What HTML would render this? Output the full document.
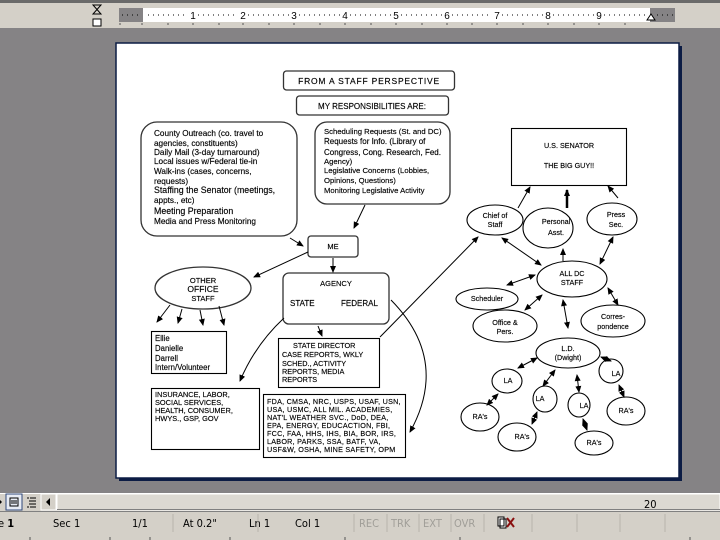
<!DOCTYPE html>
<html><head><meta charset="utf-8"><style>
html,body{margin:0;padding:0;width:720px;height:540px;overflow:hidden;background:#858385;font-family:"Liberation Sans",sans-serif}
svg{position:absolute;left:0;top:0}
</style></head><body>
<svg width="720" height="540" viewBox="0 0 720 540" xmlns="http://www.w3.org/2000/svg" font-family="Liberation Sans, sans-serif">
<defs>
<marker id="a" markerWidth="8" markerHeight="8" refX="6" refY="3" orient="auto" markerUnits="userSpaceOnUse"><path d="M0,0 L7,3 L0,6 z" fill="#000"/></marker>
<marker id="b" markerWidth="8" markerHeight="8" refX="1" refY="3" orient="auto" markerUnits="userSpaceOnUse"><path d="M7,0 L0,3 L7,6 z" fill="#000"/></marker>
</defs>
<rect x="0" y="0" width="720" height="28" fill="#d4d0c8"/>
<rect x="0" y="0" width="720" height="3" fill="#6a6a6a"/>
<rect x="119" y="8" width="24" height="14" fill="#858385"/>
<rect x="143" y="8" width="507" height="14" fill="#fff"/>
<rect x="650" y="8" width="25" height="14" fill="#858385"/>
<path d="M93,5 h8 l-8,9 h8 z" fill="none" stroke="#000"/>
<rect x="93" y="19" width="8" height="7" fill="#fff" stroke="#000"/>
<path d="M647,20 l4,-6 l4,6 z" fill="#fff" stroke="#000"/>
<g font-size="10" fill="#000" text-anchor="middle">
<text x="193" y="19">1</text><text x="243" y="19">2</text><text x="294" y="19">3</text><text x="345" y="19">4</text><text x="396" y="19">5</text><text x="447" y="19">6</text><text x="497" y="19">7</text><text x="548" y="19">8</text><text x="599" y="19">9</text>
</g>
<path d="M122,15 h18 M148,15 h40 M198,15 h40 M248,15 h41 M299,15 h41 M350,15 h41 M401,15 h41 M452,15 h40 M502,15 h41 M553,15 h41 M604,15 h42 M657,15 h16" stroke="#000" stroke-dasharray="1,4" stroke-width="1"/>
<path d="M120,23 v2 M142,23 v2 M168,23 v2 M193,23 v2 M219,23 v2 M243,23 v2 M269,23 v2 M294,23 v2 M320,23 v2 M345,23 v2 M371,23 v2 M396,23 v2 M422,23 v2 M447,23 v2 M472,23 v2 M497,23 v2 M523,23 v2 M548,23 v2 M574,23 v2 M599,23 v2 M625,23 v2" stroke="#555"/>

<rect x="119" y="46" width="563" height="435" fill="#0c1c44"/>
<rect x="116" y="43" width="563" height="435" fill="#fff" stroke="#0c1c44" stroke-width="1.5"/>

<g fill="none" stroke="#333" stroke-width="1.3">
<rect x="283.5" y="71" width="171" height="19" rx="3"/>
<rect x="296.5" y="96" width="152" height="19" rx="3"/>
<rect x="141" y="122" width="156" height="114" rx="16"/>
<rect x="315" y="122" width="135" height="82" rx="12"/>
<rect x="308" y="236" width="50" height="21" rx="3"/>
<ellipse cx="203" cy="288" rx="48" ry="21"/>
<rect x="283" y="273" width="106" height="51" rx="6"/>
</g>
<g fill="none" stroke="#000" stroke-width="1.1">
<rect x="151.5" y="331.5" width="75" height="42"/>
<rect x="278.5" y="338.5" width="101" height="49"/>
<rect x="151.5" y="388.5" width="108" height="61"/>
<rect x="263.5" y="394.5" width="142" height="63"/>
<rect x="511.5" y="128.5" width="115" height="57"/>
<ellipse cx="495" cy="220" rx="28" ry="15"/>
<ellipse cx="548" cy="228" rx="25" ry="20"/>
<ellipse cx="612" cy="219" rx="25" ry="16"/>
<ellipse cx="572" cy="279" rx="35" ry="18"/>
<ellipse cx="487" cy="299" rx="31" ry="11"/>
<ellipse cx="505" cy="326" rx="32" ry="16"/>
<ellipse cx="613" cy="321" rx="32" ry="16"/>
<ellipse cx="568" cy="353" rx="32" ry="15"/>
<ellipse cx="507" cy="381" rx="15" ry="12"/>
<ellipse cx="545" cy="399" rx="12" ry="13"/>
<ellipse cx="579" cy="405" rx="11" ry="12"/>
<ellipse cx="611" cy="371" rx="12" ry="12"/>
<ellipse cx="480" cy="417" rx="19" ry="14"/>
<ellipse cx="517" cy="437" rx="19" ry="14"/>
<ellipse cx="594" cy="443" rx="19" ry="12"/>
<ellipse cx="626" cy="411" rx="19" ry="14"/>
</g>

<g stroke="#000" stroke-width="1" fill="none">
<line x1="290" y1="238" x2="303" y2="246" marker-end="url(#a)"/>
<line x1="365" y1="205" x2="354" y2="228" marker-end="url(#a)"/>
<line x1="308" y1="252" x2="254" y2="277" marker-end="url(#a)"/>
<line x1="333" y1="258" x2="333" y2="272" marker-end="url(#a)"/>
<line x1="170" y1="305" x2="157" y2="322" marker-end="url(#a)"/>
<line x1="182" y1="309" x2="178" y2="323" marker-end="url(#a)"/>
<line x1="200" y1="310" x2="203" y2="325" marker-end="url(#a)"/>
<line x1="219" y1="306" x2="224" y2="325" marker-end="url(#a)"/>
<line x1="318" y1="326" x2="322" y2="336" marker-end="url(#a)"/>
<path d="M284,318 Q255,345 240,381" marker-end="url(#a)"/>
<path d="M391,300 Q450,360 410,432" marker-end="url(#a)"/>
<line x1="380" y1="337" x2="478" y2="237" marker-end="url(#a)"/>
<line x1="518" y1="208" x2="530" y2="187" marker-end="url(#a)"/>
<line x1="567" y1="208" x2="567" y2="190" marker-end="url(#a)" stroke-width="2.5"/>
<line x1="618" y1="198" x2="608" y2="186" marker-end="url(#a)"/>
<line x1="502" y1="238" x2="541" y2="265" marker-start="url(#b)" marker-end="url(#a)"/>
<line x1="563" y1="261" x2="563" y2="249" marker-end="url(#a)"/>
<line x1="613" y1="237" x2="600" y2="264" marker-start="url(#b)" marker-end="url(#a)"/>
<line x1="535" y1="275" x2="507" y2="285" marker-start="url(#b)" marker-end="url(#a)"/>
<line x1="542" y1="295" x2="525" y2="310" marker-start="url(#b)" marker-end="url(#a)"/>
<line x1="608" y1="288" x2="618" y2="305" marker-start="url(#b)" marker-end="url(#a)"/>
<line x1="563" y1="300" x2="568" y2="328" marker-start="url(#b)" marker-end="url(#a)"/>
<line x1="537" y1="358" x2="518" y2="368" marker-start="url(#b)" marker-end="url(#a)"/>
<line x1="555" y1="370" x2="543" y2="386" marker-start="url(#b)" marker-end="url(#a)"/>
<line x1="577" y1="375" x2="579" y2="392" marker-start="url(#b)" marker-end="url(#a)"/>
<line x1="601" y1="357" x2="611" y2="361" marker-start="url(#b)" marker-end="url(#a)"/>
<line x1="498" y1="394" x2="487" y2="405" marker-start="url(#b)" marker-end="url(#a)"/>
<line x1="537" y1="412" x2="532" y2="424" marker-start="url(#b)" marker-end="url(#a)"/>
<line x1="583" y1="419" x2="587" y2="430" marker-start="url(#b)" marker-end="url(#a)"/>
<line x1="619" y1="385" x2="624" y2="397" marker-start="url(#b)" marker-end="url(#a)"/>
</g>

<g fill="#000" font-size="8.5" stroke="#000" stroke-width="0.15">
<text x="369" y="84" text-anchor="middle" letter-spacing="0.8">FROM A STAFF PERSPECTIVE</text>
<text x="372" y="109" text-anchor="middle" font-size="8">MY RESPONSIBILITIES ARE:</text>
<g font-size="8.2">
<text x="154" y="136">County Outreach (co. travel to</text>
<text x="154" y="146">agencies, constituents)</text>
<text x="154" y="155">Daily Mail (3-day turnaround)</text>
<text x="154" y="164">Local issues w/Federal tie-in</text>
<text x="154" y="174">Walk-ins (cases, concerns,</text>
<text x="154" y="184">requests)</text>
<text x="154" y="193" font-size="8.8">Staffing the Senator (meetings,</text>
<text x="154" y="203">appts., etc)</text>
<text x="154" y="214" font-size="8.8">Meeting Preparation</text>
<text x="154" y="224">Media and Press Monitoring</text>
<text x="324" y="134" font-size="7.7">Scheduling Requests (St. and DC)</text>
<text x="324" y="144" font-size="8">Requests for Info. (Library of</text>
<text x="324" y="155" font-size="8">Congress, Cong. Research, Fed.</text>
<text x="324" y="164" font-size="7.7">Agency)</text>
<text x="324" y="173" font-size="7.7">Legislative Concerns (Lobbies,</text>
<text x="324" y="183" font-size="7.7">Opinions, Questions)</text>
<text x="324" y="193" font-size="7.7">Monitoring Legislative Activity</text>
</g>
<text x="333" y="249" text-anchor="middle" font-size="7.5">ME</text>
<g font-size="7.5" text-anchor="middle">
<text x="203" y="283">OTHER</text>
<text x="203" y="292" font-size="8.5">OFFICE</text>
<text x="203" y="301">STAFF</text>
<text x="336" y="286">AGENCY</text>
</g>
<text x="290" y="306" font-size="8">STATE</text>
<text x="341" y="306" font-size="8">FEDERAL</text>
<g font-size="7.8">
<text x="155" y="341">Ellie</text><text x="155" y="351">Danielle</text><text x="155" y="361">Darrell</text><text x="155" y="370">Intern/Volunteer</text>
</g>
<g font-size="7.3">
<text x="293" y="348">STATE DIRECTOR</text>
<text x="282" y="357">CASE REPORTS, WKLY</text>
<text x="282" y="366">SCHED., ACTIVITY</text>
<text x="282" y="374">REPORTS, MEDIA</text>
<text x="282" y="382">REPORTS</text>
</g>
<g font-size="7.4">
<text x="155" y="397">INSURANCE, LABOR,</text>
<text x="155" y="405">SOCIAL SERVICES,</text>
<text x="155" y="413">HEALTH, CONSUMER,</text>
<text x="155" y="421">HWYS., GSP, GOV</text>
</g>
<g font-size="7.2" letter-spacing="0.25">
<text x="267" y="404">FDA, CMSA, NRC, USPS, USAF, USN,</text>
<text x="267" y="412">USA, USMC, ALL MIL. ACADEMIES,</text>
<text x="267" y="420">NAT'L WEATHER SVC., DoD, DEA,</text>
<text x="267" y="428">EPA, ENERGY, EDUCACTION, FBI,</text>
<text x="267" y="436">FCC, FAA, HHS, IHS, BIA, BOR, IRS,</text>
<text x="267" y="444">LABOR, PARKS, SSA, BATF, VA,</text>
<text x="267" y="452">USF&amp;W, OSHA, MINE SAFETY, OPM</text>
</g>
<g font-size="7.2" text-anchor="middle">
<text x="569" y="148">U.S. SENATOR</text>
<text x="569" y="168">THE BIG GUY!!</text>
<text x="495" y="218">Chief of</text><text x="495" y="227">Staff</text>
<text x="556" y="224">Personal</text><text x="556" y="235">Asst.</text>
<text x="616" y="217">Press</text><text x="616" y="227">Sec.</text>
<text x="572" y="276">ALL DC</text><text x="572" y="285">STAFF</text>
<text x="487" y="301">Scheduler</text>
<text x="505" y="325">Office &amp;</text><text x="505" y="334">Pers.</text>
<text x="613" y="319">Corres-</text><text x="613" y="329">pondence</text>
<text x="568" y="351">L.D.</text><text x="568" y="360">(Dwight)</text>
<text x="508" y="383">LA</text><text x="540" y="401">LA</text><text x="584" y="408">LA</text><text x="616" y="376">LA</text>
<text x="480" y="419">RA's</text><text x="522" y="439">RA's</text><text x="594" y="445">RA's</text><text x="626" y="413">RA's</text>
</g>
</g>

<rect x="0" y="493" width="720" height="47" fill="#d4d0c8"/>
<rect x="0" y="493" width="720" height="1" fill="#fff"/>
<rect x="6" y="494" width="16" height="16" fill="#e8ecf4" stroke="#31497a"/>
<path d="M10,498 h8 v8 h-8z M11,501 h6 M11,503 h6" fill="none" stroke="#000"/>
<path d="M0,500 l2,2 l-2,2" fill="#000"/>
<path d="M27,498 h2 M30,498 h6 M29,501 h7 M29,504 h7 M27,507 h2 M30,507 h6" stroke="#000"/>
<rect x="41" y="494" width="15" height="16" fill="#d4d0c8" stroke="#fff"/>
<path d="M50,498 l-4,4 l4,4z" fill="#000"/>
<rect x="57" y="494" width="663" height="16" fill="#dcd9d2" stroke="#fff"/>
<rect x="57" y="509" width="663" height="1" fill="#808080"/>
<text x="644" y="508" font-size="11" font-family="DejaVu Sans Condensed, sans-serif">20</text>
<rect x="0" y="511" width="720" height="1" fill="#808080"/>
<g font-family="DejaVu Sans Condensed, sans-serif" font-size="11" fill="#000">
<text x="-2" y="527">e <tspan font-weight="bold">1</tspan></text>
<text x="53" y="527">Sec 1</text>
<text x="132" y="527">1/1</text>
<text x="183" y="527">At 0.2"</text>
<text x="249" y="527">Ln 1</text>
<text x="295" y="527">Col 1</text>
<g fill="#a09e98"><text x="359" y="527">REC</text><text x="391" y="527">TRK</text><text x="423" y="527">EXT</text><text x="454" y="527">OVR</text></g>
</g>
<path d="M173,514 v18 M258,514 v18 M354,514 v18 M387,514 v18 M419,514 v18 M451,514 v18 M484,514 v18 M532,514 v18 M577,514 v18 M620,514 v18 M665,514 v18" stroke="#b8b4ac"/>
<path d="M498,517 h6 v9 h-6z M500,519 h6 v9 h-6z" fill="#fff" stroke="#000"/>
<path d="M507,518 l7,9 M514,518 l-7,9" stroke="#8a1010" stroke-width="2"/>
<rect x="0" y="536" width="720" height="4" fill="#d4d0c8"/>
<path d="M30,537 v3 M110,537 v3 M150,537 v3 M230,537 v3 M345,537 v3 M460,537 v3 M690,537 v3" stroke="#555"/>
</svg>
</body></html>
